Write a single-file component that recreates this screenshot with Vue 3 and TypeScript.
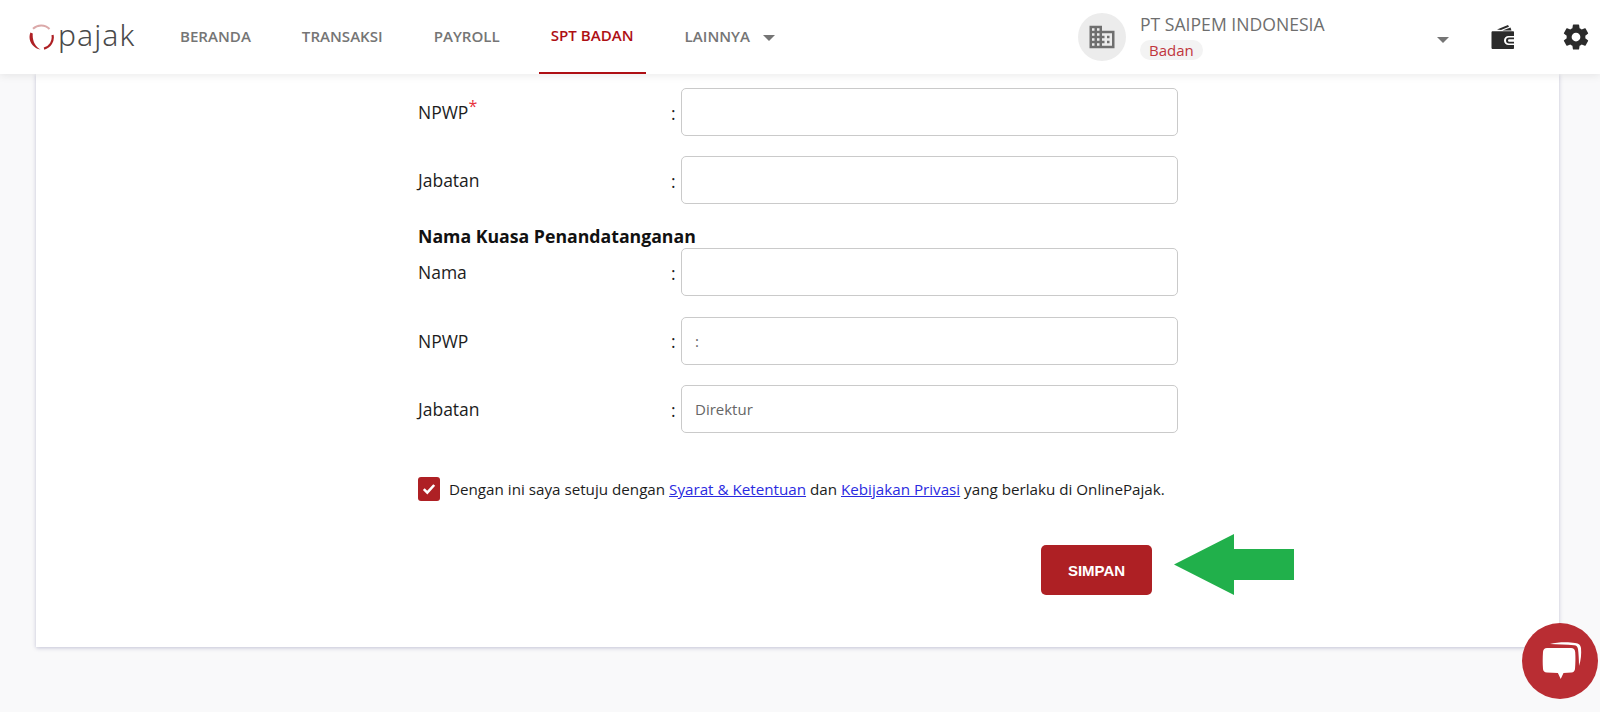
<template>
  <div class="page">
    <header class="topbar">
      <div class="logo">
        <svg class="logo-mark" width="26" height="26" viewBox="0 0 26 26" fill="none">
          <path d="M5 4.800A11.500 11.500 0 0 1 21.500 5" stroke="#dba9a9" stroke-width="2" />
          <path d="M2.400 8.500C-.5 15.500 4 24 12.500 25.500 7.500 23 4 17 4.800 9.500z" fill="#ae2024" />
          <path d="M16 24.600A11.500 11.500 0 0 0 24.500 11" stroke="#ae2024" stroke-width="2.200" />
        </svg>
        <span class="logo-text">pajak</span>
      </div>
      <nav class="nav">
        <a v-for="item in navItems" :key="item" class="nav-item" :class="{ active: item === 'SPT BADAN' }">{{ item }}</a>
        <a class="nav-item more">LAINNYA <i class="caret" /></a>
      </nav>
      <div class="account">
        <div class="avatar">
          <svg width="30" height="30" viewBox="0 0 24 24" fill="#6f6f6f">
            <path d="M12 7V3H2v18h20V7H12zM6 19H4v-2h2v2zm0-4H4v-2h2v2zm0-4H4V9h2v2zm0-4H4V5h2v2zm4 12H8v-2h2v2zm0-4H8v-2h2v2zm0-4H8V9h2v2zm0-4H8V5h2v2zm10 12h-8v-2h2v-2h-2v-2h2v-2h-2V9h8v10zm-2-8h-2v2h2v-2zm0 4h-2v2h2v-2z" />
          </svg>
        </div>
        <div class="account-info">
          <div class="company">PT SAIPEM INDONESIA</div>
          <div class="badge">Badan</div>
        </div>
        <i class="caret account-caret" />
        <svg class="wallet" width="24" height="24" viewBox="0 0 24 24">
          <path fill="#2b2b2b" d="M6 4.500 17 0l1 1.800L10 5zM11.500 5.600 19.500 2.500l1 3.100z" />
          <path fill="#2b2b2b" d="M.5 7.500C.5 6.700 1 6.200 1.800 6.200h20.400c.5 0 .8.300.8.800v4h-5.500a4.500 4.500 0 0 0 0 9H23v3c0 .5-.3 1-1 1H2c-1 0-1.500-.5-1.500-1.500z" />
          <path fill="#2b2b2b" d="M18 12.500h5v6h-5a3 3 0 0 1 0-6z" />
          <path fill="#fff" d="M18.200 14.300H23v2.400h-4.800a1.200 1.200 0 0 1 0-2.400z" />
        </svg>
        <svg class="gear" width="30" height="30" viewBox="0 0 24 24" fill="#2b2b2b">
          <path d="M19.430 12.980c.04-.32.07-.64.07-.98s-.03-.66-.07-.98l2.110-1.650c.19-.15.24-.42.120-.64l-2-3.460c-.12-.22-.39-.30-.61-.22l-2.490 1c-.52-.40-1.080-.73-1.690-.98l-.38-2.650A.488.488 0 0 0 14 2h-4c-.25 0-.46.18-.49.420l-.38 2.650c-.61.25-1.170.59-1.690.98l-2.490-1c-.23-.09-.49 0-.61.22l-2 3.460c-.13.22-.07.49.12.64l2.110 1.650c-.04.32-.07.65-.07.98s.03.66.07.98l-2.110 1.650c-.19.15-.24.42-.12.64l2 3.460c.12.22.39.30.61.22l2.490-1c.52.40 1.080.73 1.690.98l.38 2.650c.03.24.24.42.49.42h4c.25 0 .46-.18.49-.42l.38-2.650c.61-.25 1.170-.59 1.690-.98l2.490 1c.23.09.49 0 .61-.22l2-3.460c.12-.22.07-.49-.12-.64l-2.110-1.650zM12 15.500a3.500 3.500 0 1 1 0-7 3.500 3.500 0 0 1 0 7z" />
        </svg>
      </div>
    </header>

    <main class="card">
      <form class="form" @submit.prevent>
        <div v-for="row in topRows" :key="row.label" class="row">
          <label class="label">{{ row.label }}<sup v-if="row.required" class="req">*</sup></label>
          <span class="colon">:</span>
          <input class="field" :value="row.value" />
        </div>
        <h4 class="section">Nama Kuasa Penandatanganan</h4>
        <div v-for="row in signerRows" :key="row.label" class="row signer">
          <label class="label">{{ row.label }}</label>
          <span class="colon">:</span>
          <input class="field" :value="row.value" />
        </div>
        <div class="agree">
          <span class="check">
            <svg width="14" height="12" viewBox="0 0 14 12" fill="none">
              <path d="M1.800 6.200 5.300 9.700 12.200 2" stroke="#fff" stroke-width="2.600" />
            </svg>
          </span>
          <span class="agree-text">Dengan ini saya setuju dengan <a class="link">Syarat &amp; Ketentuan</a> dan <a class="link">Kebijakan Privasi</a> yang berlaku di OnlinePajak.</span>
        </div>
        <div class="actions">
          <button class="save" type="submit">SIMPAN</button>
        </div>
        <!-- panah hijau anotasi di atas screenshot -->
        <svg class="arrow" width="120" height="61" viewBox="0 0 120 61">
          <path fill="#21b04b" d="M0 30.500 60 0v15h60v31H60v15z" />
        </svg>
      </form>
    </main>

    <button class="chat" type="button">
      <svg width="46" height="46" viewBox="0 0 46 46" fill="#fff">
        <path d="M13 6C20 4 32 4 38 5c4 .5 5.500 2 6 5 .5 6 0 12-2 18 0-7-.5-13-1-17-.5-2.500-1.500-3.500-4-3.800C30 6.500 20 6.500 13 6z" />
        <path d="M10 10h24c2.500 0 4 1.500 4.200 4 .4 5.500.3 11-.2 17-.2 2-1.500 3.300-3.500 3.500l-8 .5-2.800 6-2.800-6-11-.5c-2.300-.1-3.700-1.500-3.900-3.600-.4-5.500-.4-11 0-16.900C6.200 11.300 7.700 10 10 10z" />
      </svg>
    </button>
  </div>
</template>

<script setup lang="ts">
interface Row {
  label: string;
  value?: string;
  required?: boolean;
}

const navItems = ['BERANDA', 'TRANSAKSI', 'PAYROLL', 'SPT BADAN'];

const topRows: Row[] = [
  { label: 'NPWP', required: true },
  { label: 'Jabatan' },
];

const signerRows: Row[] = [
  { label: 'Nama' },
  { label: 'NPWP', value: ':' },
  { label: 'Jabatan', value: 'Direktur' },
];
</script>

<style>
html,
body {
  margin: 0;
  background: #f9f9fa;
}
</style>

<style scoped>
.page {
  position: relative;
  height: 712px;
  overflow: hidden;
  background: #f9f9fa;
  font-family: 'Open Sans', sans-serif;
  color: #1c1c1c;
}

.topbar {
  position: relative;
  z-index: 2;
  display: flex;
  align-items: center;
  height: 74px;
  background: #fff;
  box-shadow: 0 2px 8px rgba(0, 0, 0, 0.08);
}
.logo {
  display: flex;
  align-items: center;
  gap: 4px;
  width: 168px;
  padding-left: 28px;
  box-sizing: border-box;
}
.logo-mark {
  flex: none;
}
.logo-text {
  font-family: 'Noto Sans', sans-serif;
  font-weight: 300;
  font-size: 30px;
  line-height: 30px;
  letter-spacing: 1.1px;
  color: #4a4a4a;
  margin-top: -4px;
}
.nav {
  display: flex;
  align-items: stretch;
  height: 73px;
  gap: 27px;
}
.nav-item {
  display: flex;
  align-items: center;
  padding: 0 12px;
  font-size: 15.100px;
  font-weight: 600;
  color: #757575;
  white-space: pre;
  border-bottom: 2px solid transparent;
  box-sizing: border-box;
}
.nav-item.active {
  padding-bottom: 3px;
  color: #ae0f14;
  border-bottom-color: #ae0f14;
}
.caret {
  display: inline-block;
  width: 0;
  height: 0;
  border-left: 6.500px solid transparent;
  border-right: 6.500px solid transparent;
  border-top: 6px solid #757575;
}
.more .caret {
  margin-left: 9px;
  margin-top: 4px;
}

.account {
  display: flex;
  align-items: center;
  margin-left: auto;
}
.avatar {
  display: flex;
  align-items: center;
  justify-content: center;
  width: 48px;
  height: 48px;
  border-radius: 50%;
  background: #ececec;
}
.account-info {
  width: 297px;
  margin-left: 14px;
  margin-top: -2px;
}
.company {
  margin-bottom: 4px;
  font-size: 17.600px;
  line-height: 24px;
  color: #6e6e6e;
}
.badge {
  width: fit-content;
  padding: 0 9px;
  border-radius: 10px;
  background: #f3f3f3;
  color: #c0353c;
  font-size: 15px;
  line-height: 20px;
}
.account-caret {
  margin-top: 5px;
}
.wallet {
  margin-left: 42px;
}
.gear {
  margin-left: 46px;
  margin-right: 9px;
}

.card {
  height: 573px;
  margin: 0 41px 0 36px;
  background: #fff;
  box-shadow: 0 1px 4px rgba(70, 70, 130, 0.3);
}
.form {
  position: relative;
  width: 760px;
  margin-left: 382px;
  padding-top: 14px;
}
.row {
  display: flex;
  align-items: center;
  height: 48px;
  margin-bottom: 20px;
}
.row.signer {
  margin-bottom: 20.500px;
}
.label {
  width: 253px;
  font-size: 17.500px;
}
.req {
  color: #e8323c;
  font-size: 16px;
  line-height: 0;
  vertical-align: 7px;
}
.colon {
  width: 10px;
  padding-top: 1px;
  font-size: 17.500px;
}
.field {
  width: 497px;
  height: 48px;
  padding: 0 13px;
  box-sizing: border-box;
  border: 1px solid #cacaca;
  border-radius: 5px;
  outline: none;
  background: #fff;
  font-family: 'Open Sans', sans-serif;
  font-size: 15px;
  color: #666;
}
.section {
  margin: -2px 0 -2px;
  font-size: 17.700px;
  font-weight: 700;
  line-height: 28px;
  color: #111;
}
.agree {
  display: flex;
  align-items: center;
  gap: 9px;
  margin-top: 44px;
}
.check {
  display: flex;
  align-items: center;
  justify-content: center;
  width: 22px;
  height: 24px;
  border-radius: 3px;
  background: #ae2024;
}
.agree-text {
  font-size: 15.200px;
  white-space: nowrap;
}
.link {
  color: #2a2ae0;
  text-decoration: underline;
}
.actions {
  display: flex;
  margin-top: 44px;
  padding-left: 623px;
}
.save {
  width: 111px;
  height: 50px;
  border: none;
  border-radius: 5px;
  background: #ae2024;
  color: #fff;
  font-family: 'Liberation Sans', sans-serif;
  font-size: 15px;
  font-weight: 700;
}
.arrow {
  position: absolute;
  left: 756px;
  top: 460px;
}
.chat {
  position: absolute;
  right: 2px;
  top: 623px;
  display: flex;
  align-items: center;
  justify-content: center;
  width: 76px;
  height: 76px;
  padding: 0;
  border: none;
  border-radius: 50%;
  background: #b92d33;
}
</style>
